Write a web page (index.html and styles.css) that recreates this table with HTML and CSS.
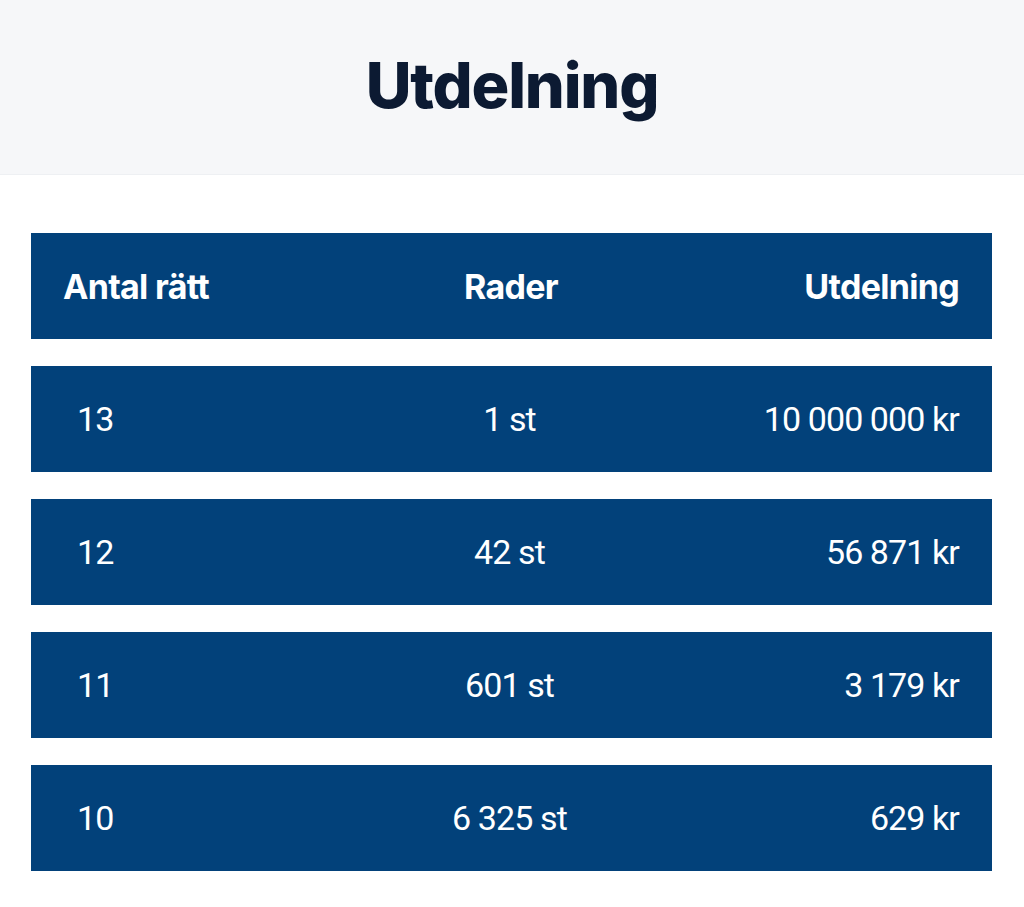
FILE: index.html
```html
<!DOCTYPE html>
<html lang="sv">
<head>
<meta charset="utf-8">
<link rel="stylesheet" href="styles.css">
</head>
<body>
<header class="hero"><h1 class="title">Utdelning</h1></header>
<main class="table">
  <div class="row head"><span class="c1">Antal rätt</span><span class="c2">Rader</span><span class="c3">Utdelning</span></div>
  <div class="row"><span class="c1">13</span><span class="c2">1 st</span><span class="c3">10 000 000 kr</span></div>
  <div class="row"><span class="c1">12</span><span class="c2">42 st</span><span class="c3">56 871 kr</span></div>
  <div class="row"><span class="c1">11</span><span class="c2">601 st</span><span class="c3">3 179 kr</span></div>
  <div class="row"><span class="c1">10</span><span class="c2">6 325 st</span><span class="c3">629 kr</span></div>
</main>
</body>
</html>
```
FILE: styles.css
```css
html, body { margin: 0; padding: 0; background: #fff; }
body { font-family: Roboto, "Liberation Sans", sans-serif; }
.hero {
  height: 174px;
  background: #f6f7f9;
  border-bottom: 1px solid #eef0f3;
  display: flex;
  align-items: center;
  justify-content: center;
}
.title {
  margin: 0;
  font-family: Inter, "Liberation Sans", sans-serif;
  font-weight: 800;
  font-size: 63px;
  letter-spacing: -1.2px;
  color: #0c1a32;
  padding-bottom: 4px;
}
.table {
  margin: 58px 32px 0 31px;
  display: flex;
  flex-direction: column;
  gap: 27px;
}
.row {
  height: 106px;
  background: #02417a;
  color: #fff;
  display: grid;
  grid-template-columns: 1fr 1fr 1fr;
  align-items: center;
  padding: 0 33px 0 46px;
  font-size: 34px;
  letter-spacing: -0.9px;
}
.row .c1 { text-align: left; }
.row .c2 { text-align: center; margin-left: -17px; }
.row .c3 { text-align: right; }
.row.head {
  padding-left: 32px;
  font-family: Inter, "Liberation Sans", sans-serif;
  font-weight: 700;
  font-size: 34px;
  letter-spacing: -0.7px;
}
.row.head .c2 { margin-left: 0; }
```
